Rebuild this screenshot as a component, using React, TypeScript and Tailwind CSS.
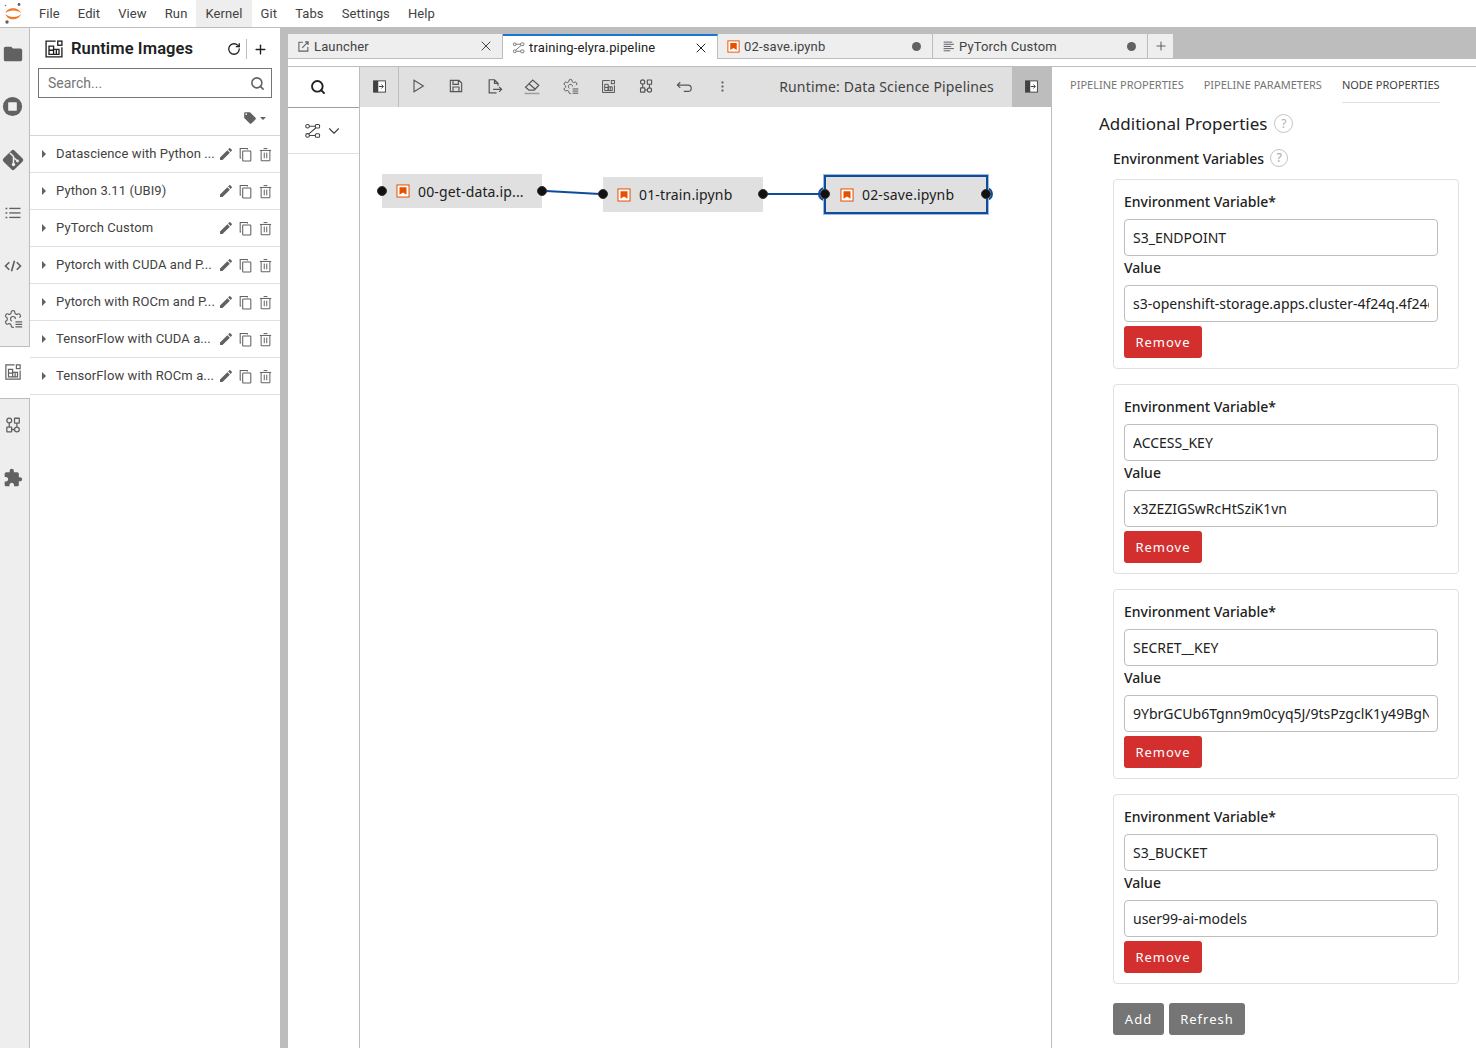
import { ChevronDown, Plus, RotateCw, Search, X } from "lucide-react";

const ui = "font-['Roboto',sans-serif]";
const noto = "font-['Noto_Sans',sans-serif]";

type P = { className?: string };

const Filled = ({ d, className }: P & { d: string }) => (
  <svg viewBox="0 0 24 24" className={className} fill="currentColor">
    <path d={d} />
  </svg>
);

const Line = ({ className, children }: P & { children: React.ReactNode }) => (
  <svg viewBox="0 0 24 24" className={className} fill="none" stroke="currentColor" strokeWidth="1.7">
    {children}
  </svg>
);

const JupyterLogo = () => (
  <svg viewBox="0 0 24 27" className="w-[24px] h-[27px]">
    <path d="M5.500 13C7 6.500 19 6.500 21 13 18 9.500 9 9.500 5.500 13z" fill="#f37726" />
    <path d="M5.500 14C7 21 19 21 21 14 18 18 9 18 5.500 14z" fill="#f37726" />
    <circle cx="19" cy="4.500" r="1.400" fill="#616161" />
    <circle cx="7" cy="22" r="1.700" fill="#616161" />
    <circle cx="5.500" cy="5.500" r="0.800" fill="#757575" />
  </svg>
);

const FolderIcon = ({ className }: P) => (
  <Filled className={className} d="M10 4H4c-1.1 0-1.99.9-1.99 2L2 18c0 1.1.9 2 2 2h16c1.1 0 2-.9 2-2V8c0-1.1-.9-2-2-2h-8l-2-2z" />
);

const StopIcon = ({ className }: P) => (
  <svg viewBox="0 0 24 24" className={className}>
    <circle cx="12" cy="12" r="10" fill="currentColor" />
    <rect x="7.500" y="7.500" width="9" height="9" rx="0.500" fill="#eeeeee" />
  </svg>
);

const GitIcon = ({ className }: P) => (
  <svg viewBox="0 0 24 24" className={className}>
    <rect x="4.200" y="4.200" width="15.600" height="15.600" rx="2" transform="rotate(45 12 12)" fill="currentColor" />
    <path d="M9 5l3.500 3.500v8M12.500 9.500l4 3.500" stroke="#eeeeee" strokeWidth="1.500" fill="none" />
    <circle cx="12.500" cy="16.500" r="1.700" fill="#eeeeee" />
    <circle cx="16.500" cy="13" r="1.400" fill="#eeeeee" />
  </svg>
);

const ListIcon = ({ className }: P) => (
  <svg viewBox="0 0 24 24" className={className} fill="currentColor">
    <rect x="7" y="5" width="15" height="1.800" />
    <rect x="7" y="11" width="15" height="1.800" />
    <rect x="7" y="17" width="15" height="1.800" />
    <rect x="2" y="5" width="2.400" height="2" />
    <rect x="2" y="11" width="2.400" height="2" />
    <rect x="2" y="17" width="2.400" height="2" />
  </svg>
);

const CodeIcon = ({ className }: P) => (
  <svg viewBox="0 0 24 24" className={className} fill="none" stroke="currentColor" strokeWidth="2.200">
    <path d="M7 7l-5 5 5 5M17 7l5 5-5 5M14 5l-4 14" />
  </svg>
);

const GearListIcon = ({ className }: P) => (
  <svg viewBox="0 0 24 24" className={className} fill="none" stroke="currentColor" strokeWidth="1.400">
    <path d="M12.220 2h-.44a2 2 0 0 0-2 2v.18a2 2 0 0 1-1 1.730l-.43.25a2 2 0 0 1-2 0l-.15-.08a2 2 0 0 0-2.730.73l-.22.38a2 2 0 0 0 .73 2.730l.15.1a2 2 0 0 1 1 1.720v.51a2 2 0 0 1-1 1.740l-.15.09a2 2 0 0 0-.73 2.730l.22.38a2 2 0 0 0 2.730.73l.15-.08a2 2 0 0 1 2 0l.43.25a2 2 0 0 1 1 1.730V20a2 2 0 0 0 2 2h1.200" />
    <path d="M12.220 2a2 2 0 0 1 2 2v.18a2 2 0 0 0 1 1.730l.43.25a2 2 0 0 0 2 0l.15-.08a2 2 0 0 1 2.730.73l.22.38a2 2 0 0 1-.73 2.730l-.4.3" />
    <path d="M15 12a3 3 0 1 0-4.500 2.600" />
    <path d="M15 15.500h8M15 18.500h8M15 21.500h8" />
  </svg>
);

const ImagesIcon = ({ className }: P) => (
  <svg viewBox="0 0 24 24" className={className} fill="none" stroke="currentColor" strokeWidth="1.600">
    <path d="M14 2.500H2.500v19h19V10" />
    <rect x="16.500" y="2.500" width="5" height="5" />
    <path d="M6 8.500h5.500v10H6zM11.500 12.500h6.500v6h-6.500zM6 13.500h5.500M14.800 12.500v6" />
  </svg>
);

const CatalogIcon = ({ className }: P) => (
  <svg viewBox="0 0 24 24" className={className} fill="none" stroke="currentColor" strokeWidth="1.700">
    <circle cx="7" cy="6" r="3.200" />
    <rect x="14" y="3" width="6.400" height="6.400" rx="0.500" />
    <rect x="3.800" y="14.800" width="6.400" height="6.400" rx="0.500" />
    <circle cx="17.200" cy="18" r="3.200" />
    <path d="M7 9.200v5.600M17.200 9.400v5.400M10.200 18H14" />
  </svg>
);

const PuzzleIcon = ({ className }: P) => (
  <Filled className={className} d="M20.500 11H19V7c0-1.100-.9-2-2-2h-4V3.500C13 2.120 11.880 1 10.500 1S8 2.120 8 3.500V5H4c-1.100 0-1.990.9-1.990 2v3.800H3.500c1.490 0 2.700 1.210 2.700 2.700s-1.210 2.700-2.700 2.700H2V20c0 1.100.9 2 2 2h3.800v-1.500c0-1.490 1.210-2.700 2.700-2.700 1.490 0 2.700 1.210 2.700 2.700V22H17c1.100 0 2-.9 2-2v-4h1.500c1.380 0 2.500-1.120 2.500-2.500S21.880 11 20.500 11z" />
);

const PencilIcon = ({ className }: P) => (
  <Filled className={className} d="M3 17.250V21h3.750L17.810 9.940l-3.750-3.750L3 17.250zM20.710 7.040c.39-.39.39-1.020 0-1.410l-2.340-2.340c-.39-.39-1.020-.39-1.410 0l-1.830 1.830 3.750 3.750 1.830-1.830z" />
);

const CopyIcon = ({ className }: P) => (
  <svg viewBox="0 0 24 24" className={className} fill="none" stroke="currentColor" strokeWidth="1.700">
    <path d="M5 17.500H3.500v-15H15V4" />
    <rect x="7.500" y="6.500" width="13" height="16" rx="1" />
  </svg>
);

const TrashIcon = ({ className }: P) => (
  <svg viewBox="0 0 24 24" className={className} fill="none" stroke="currentColor" strokeWidth="1.600">
    <path d="M3 5.500h18M9 2.500h6M5 5.500v16.500h14V5.500M10 9v9M14 9v9" />
  </svg>
);

const TagIcon = ({ className }: P) => (
  <Filled className={className} d="M21.410 11.580l-9-9C12.050 2.220 11.550 2 11 2H4c-1.100 0-2 .9-2 2v7c0 .55.22 1.050.59 1.420l9 9c.36.36.86.58 1.410.58.55 0 1.050-.22 1.410-.59l7-7c.37-.36.59-.86.59-1.410 0-.55-.23-1.060-.59-1.420zM5.500 7C4.670 7 4 6.330 4 5.500S4.670 4 5.500 4 7 4.670 7 5.500 6.330 7 5.500 7z" />
);

const PipelineIcon = ({ className }: P) => (
  <svg viewBox="0 0 24 24" className={className} fill="none" stroke="currentColor" strokeWidth="1.500">
    <circle cx="5" cy="6" r="2.600" />
    <rect x="16" y="3.500" width="6" height="5" rx="1.500" />
    <circle cx="5" cy="19" r="2.600" />
    <rect x="16" y="16.500" width="6" height="5" rx="1.500" />
    <path d="M7.600 6H16M7.600 19H16M16.500 8.500L6.500 17" />
  </svg>
);

const LaunchIcon = ({ className }: P) => (
  <svg viewBox="0 0 24 24" className={className} fill="none" stroke="currentColor" strokeWidth="2">
    <path d="M11 4H3.500v16.500H20V13M9.500 14.500L20.500 3.500M15 3.500h5.500V9" />
  </svg>
);

const NotebookIcon = ({ className }: P) => (
  <svg viewBox="0 0 22 22" className={className}>
    <rect x="1.500" y="1.500" width="19" height="19" fill="#fff" stroke="#e65100" strokeWidth="1.600" />
    <path d="M5.500 5h11v12l-5.500-3.500L5.500 17z" fill="#e65100" />
  </svg>
);

const TextFileIcon = ({ className }: P) => (
  <svg viewBox="0 0 24 24" className={className} fill="currentColor">
    <rect x="3" y="3" width="16" height="1.800" />
    <rect x="3" y="7" width="19" height="1.800" />
    <rect x="3" y="11" width="14" height="1.800" />
    <rect x="3" y="15" width="19" height="1.800" />
    <rect x="3" y="19" width="12" height="1.800" />
  </svg>
);

const SidebarIcon = ({ className }: P) => (
  <svg viewBox="0 0 24 24" className={className}>
    <rect x="2.500" y="3" width="19" height="18" fill="#fff" stroke="#424242" strokeWidth="1.500" />
    <rect x="2.500" y="3" width="7.500" height="18" fill="#424242" />
    <path d="M11 12h7M15 9l3.200 3-3.200 3" stroke="#424242" strokeWidth="1.600" fill="none" />
  </svg>
);

const PlayIcon = ({ className }: P) => (
  <Line className={className}>
    <path d="M6 3.500L20 12 6 20.500z" />
  </Line>
);

const SaveIcon = ({ className }: P) => (
  <Line className={className}>
    <path d="M3.500 3.500h13l4 4v13h-17zM7.500 3.500v6h8v-6M7.500 20.500v-7h9v7" />
  </Line>
);

const ExportIcon = ({ className }: P) => (
  <Line className={className}>
    <path d="M15 21H4.500V2.500H12l5 5V11M12 2.500v5h5M10 16h12M18.500 12.500L22 16l-3.500 3.500" />
  </Line>
);

const EraserIcon = ({ className }: P) => (
  <Line className={className}>
    <path d="M3.500 13.500L13 4l8 7-6 6.500H8zM8 9l8 7" />
    <path d="M2 22h20" strokeWidth="2" stroke="#9e9e9e" />
  </Line>
);

const UndoIcon = ({ className }: P) => (
  <Line className={className}>
    <path d="M6 6L2 10l4 4M2 10h15a4.500 4.500 0 0 1 0 9h-6" />
  </Line>
);

const DotsIcon = ({ className }: P) => (
  <svg viewBox="0 0 24 24" className={className} fill="currentColor">
    <rect x="10.500" y="4" width="3" height="3" />
    <rect x="10.500" y="10.500" width="3" height="3" />
    <rect x="10.500" y="17" width="3" height="3" />
  </svg>
);

const menus = ["File", "Edit", "View", "Run", "Kernel", "Git", "Tabs", "Settings", "Help"];

const railIcons = [
  <FolderIcon className="w-[22px] h-[22px]" />,
  <StopIcon className="w-[23px] h-[23px]" />,
  <GitIcon className="w-[24px] h-[24px]" />,
  <ListIcon className="w-[18px] h-[18px]" />,
  <CodeIcon className="w-[18px] h-[18px]" />,
  <GearListIcon className="w-[20px] h-[20px]" />,
  <ImagesIcon className="w-[18px] h-[18px]" />,
  <CatalogIcon className="w-[18px] h-[18px]" />,
  <PuzzleIcon className="w-[20px] h-[20px]" />,
];

const images = [
  "Datascience with Python ...",
  "Python 3.11 (UBI9)",
  "PyTorch Custom",
  "Pytorch with CUDA and P...",
  "Pytorch with ROCm and P...",
  "TensorFlow with CUDA a...",
  "TensorFlow with ROCm a...",
];

const envVars = [
  { name: "S3_ENDPOINT", value: "s3-openshift-storage.apps.cluster-4f24q.4f24q.sandbox" },
  { name: "ACCESS_KEY", value: "x3ZEZIGSwRcHtSziK1vn" },
  { name: "SECRET__KEY", value: "9YbrGCUb6Tgnn9m0cyq5J/9tsPzgclK1y49BgNkLmPq" },
  { name: "S3_BUCKET", value: "user99-ai-models" },
];

const Rail = () => (
  <div className="w-[30px] shrink-0 flex flex-col text-[#616161]">
    {railIcons.map((icon, i) => (
      <div
        key={i}
        className={
          i === 6
            ? "h-[53px] flex items-center justify-center pr-[4px] pb-[2px] bg-white border-y border-[#bdbdbd]"
            : "h-[53px] flex items-center justify-center pr-[4px] pb-[2px] bg-[#eeeeee] border-r border-[#bdbdbd]"
        }
      >
        {icon}
      </div>
    ))}
    <div className="flex-1 bg-[#eeeeee] border-r border-[#bdbdbd]" />
  </div>
);

const RuntimePanel = () => (
  <div className={`w-[250px] shrink-0 bg-white flex flex-col ${ui}`}>
    <div className="h-[40px] flex items-center pl-[14px] pr-[12px] pt-[2px] text-[#212121]">
      <ImagesIcon className="w-[20px] h-[20px] mr-[7px]" />
      <span className="text-[16.5px] font-semibold tracking-[0.1px] flex-1">Runtime Images</span>
      <RotateCw className="w-[14px] h-[14px] mr-[5px]" strokeWidth={2.2} />
      <div className="w-px h-[20px] bg-[#bdbdbd] mr-[6px]" />
      <Plus className="w-[15px] h-[15px]" strokeWidth={2.2} />
    </div>
    <div className="mx-[8px] h-[30px] border border-[#757575] flex items-center pl-[9px] pr-[6px]">
      <span className="flex-1 text-[14px] text-[#757575]">Search...</span>
      <Search className="w-[15px] h-[15px] text-[#616161]" strokeWidth={2.5} />
    </div>
    <div className="h-[38px] pt-[3px] flex items-center justify-end pr-[14px] border-b border-[#d4d4d4] text-[#616161]">
      <TagIcon className="w-[14px] h-[14px] mr-[3px]" />
      <div className="w-0 h-0 border-x-[3px] border-x-transparent border-t-[3px] border-t-[#616161]" />
    </div>
    {images.map((name) => (
      <div key={name} className="h-[37px] flex items-center border-b border-[#e0e0e0] text-[#424242]">
        <div className="w-0 h-0 ml-[12px] border-y-[4px] border-y-transparent border-l-[4px] border-l-[#616161]" />
        <span className="ml-[10px] w-[160px] whitespace-nowrap overflow-hidden text-[13px] tracking-[0.1px]">{name}</span>
        <PencilIcon className="w-[16px] h-[16px] ml-[2px] text-[#616161]" />
        <CopyIcon className="w-[15px] h-[17px] ml-[4px] text-[#616161]" />
        <TrashIcon className="w-[15px] h-[17px] ml-[5px] text-[#616161]" />
      </div>
    ))}
  </div>
);

const Tab = ({
  icon,
  label,
  active,
  dirty,
}: {
  icon: React.ReactNode;
  label: string;
  active?: boolean;
  dirty?: boolean;
}) => (
  <div
    className={
      active
        ? "w-[215px] h-[25px] -mb-px flex items-center pl-[9px] pr-[8px] bg-white border-t-2 border-t-[#1976d2] border-r border-r-[#bdbdbd] text-[#212121]"
        : "w-[215px] h-[24px] flex items-center pl-[9px] pr-[8px] bg-[#eeeeee] border-r border-r-[#bdbdbd] text-[#424242]"
    }
  >
    {icon}
    <span className={`ml-[4px] pt-[1px] flex-1 text-[13px] tracking-[0.15px] ${ui}`}>{label}</span>
    {dirty ? <div className="w-[9px] h-[9px] rounded-full bg-[#616161] mr-[3px]" /> : <X className="w-[16px] h-[16px]" strokeWidth={1.5} />}
  </div>
);

const TabBar = () => (
  <div className="h-[32px] shrink-0 bg-[#bdbdbd] pt-[7px] flex items-start">
    <Tab icon={<LaunchIcon className="w-[13px] h-[13px] text-[#616161]" />} label="Launcher" />
    <Tab icon={<PipelineIcon className="w-[13px] h-[13px] text-[#616161]" />} label="training-elyra.pipeline" active />
    <Tab icon={<NotebookIcon className="w-[13px] h-[13px]" />} label="02-save.ipynb" dirty />
    <Tab icon={<TextFileIcon className="w-[13px] h-[13px] text-[#616161]" />} label="PyTorch Custom" dirty />
    <div className="w-[25px] h-[24px] bg-[#eeeeee] flex items-center justify-center text-[#616161]">
      <Plus className="w-[14px] h-[14px]" strokeWidth={1.8} />
    </div>
  </div>
);

const Palette = () => (
  <div className="w-[72px] shrink-0 border-r border-[#bdbdbd] flex flex-col">
    <div className="h-[41px] flex items-center justify-center border-b border-[#9e9e9e] pr-[12px] text-[#212121]">
      <Search className="w-[16px] h-[16px]" strokeWidth={2.8} />
    </div>
    <div className="h-[46px] flex items-center justify-center gap-[4px] border-b border-[#e0e0e0] pr-[1px] text-[#424242]">
      <PipelineIcon className="w-[17px] h-[17px]" />
      <ChevronDown className="w-[18px] h-[18px]" strokeWidth={1.5} />
    </div>
  </div>
);

const toolIcons = [
  <PlayIcon className="w-[16px] h-[16px]" />,
  <SaveIcon className="w-[16px] h-[16px]" />,
  <ExportIcon className="w-[17px] h-[17px]" />,
  <EraserIcon className="w-[18px] h-[18px]" />,
  <GearListIcon className="w-[17px] h-[17px]" />,
  <ImagesIcon className="w-[15px] h-[15px]" />,
  <CatalogIcon className="w-[16px] h-[16px]" />,
  <UndoIcon className="w-[17px] h-[17px]" />,
  <DotsIcon className="w-[15px] h-[15px]" />,
];

const Toolbar = () => (
  <div className="h-[40px] shrink-0 bg-[#e0e0e0] flex items-center text-[#555555]">
    <div className="w-[39px] h-full flex items-center justify-center border-r border-[#bdbdbd] pb-[2px]">
      <SidebarIcon className="w-[15px] h-[15px]" />
    </div>
    {toolIcons.map((icon, i) => (
      <div key={i} className="w-[38px] h-full flex items-center justify-center pb-[2px]">
        {icon}
      </div>
    ))}
    <span className={`flex-1 text-right pr-[18px] pb-[1px] text-[14px] tracking-[0.17px] text-[#424242] ${noto}`}>Runtime: Data Science Pipelines</span>
    <div className="w-[39px] h-full bg-[#bdbdbd] flex items-center justify-center pb-[2px]">
      <SidebarIcon className="w-[15px] h-[15px]" />
    </div>
  </div>
);

const Port = ({ className }: P) => (
  <div className={`absolute w-[10px] h-[10px] rounded-full bg-[#111111] border border-[#333333] ${className}`} />
);

const PipelineNode = ({ label, className }: P & { label: string }) => (
  <div className={`absolute flex items-center bg-[#e0e0e0] ${noto} ${className}`}>
    <NotebookIcon className="w-[14px] h-[14px] ml-[14px] mr-[8px] shrink-0" />
    <span className="text-[14px] tracking-[0.15px] text-[#212121] whitespace-nowrap">{label}</span>
  </div>
);

const Canvas = () => (
  <div className="relative flex-1 bg-white">
    <svg className="absolute left-0 top-0 w-full h-[140px]" fill="none" stroke="#0f4c9c" strokeWidth="2">
      <path d="M186 84L240 87" />
      <path d="M407 87H462" />
    </svg>
    <div className="absolute left-[458px] top-[80px] w-[14px] h-[14px] rounded-full border-2 border-[#0f4c9c]" />
    <div className="absolute left-[619px] top-[80px] w-[14px] h-[14px] rounded-full border-2 border-[#0f4c9c]" />
    <PipelineNode label="00-get-data.ip..." className="left-[22px] top-[67px] w-[160px] h-[34px]" />
    <PipelineNode label="01-train.ipynb" className="left-[243px] top-[70px] w-[160px] h-[35px]" />
    <PipelineNode
      label="02-save.ipynb"
      className="left-[464px] top-[68px] w-[164px] h-[39px] border-2 border-[#0f4c9c] shadow-[0_0_0_1px_#9db9df]"
    />
    <Port className="left-[17px] top-[79px]" />
    <Port className="left-[177px] top-[79px]" />
    <Port className="left-[238px] top-[82px]" />
    <Port className="left-[398px] top-[82px]" />
    <Port className="left-[460px] top-[82px]" />
    <Port className="left-[621px] top-[82px]" />
  </div>
);

const HelpDot = ({ className }: P) => (
  <div className={`rounded-full border border-[#c4c4c4] flex items-center justify-center text-[#b0b0b0] ${className}`}>?</div>
);

const EnvCard = ({ name, value }: { name: string; value: string }) => (
  <div className="h-[190px] rounded-[4px] border border-[#e0e0e0] pl-[10px] pt-[12px] mb-[15px]">
    <div className="h-[20px] text-[14px] font-medium leading-[20px] text-[#212121]">Environment Variable*</div>
    <input
      readOnly
      value={name}
      className="block mt-[7px] w-[314px] h-[37px] rounded-[4px] border border-[#bdbdbd] px-[8px] text-[14px] text-[#212121] outline-none"
    />
    <div className="mt-[2px] h-[20px] leading-[20px] text-[14px] font-medium text-[#212121]">Value</div>
    <input
      readOnly
      value={value}
      className="block mt-[7px] w-[314px] h-[37px] rounded-[4px] border border-[#bdbdbd] px-[8px] text-[14px] text-[#212121] outline-none"
    />
    <button className="block mt-[4px] pt-[1px] w-[78px] h-[32px] rounded-[3px] bg-[#d32f2f] text-white text-[13px] tracking-[1px]">Remove</button>
  </div>
);

const PropertiesPanel = () => (
  <div className={`w-[425px] shrink-0 border-l border-[#bdbdbd] bg-white overflow-hidden ${noto}`}>
    <div className="h-[36px] flex items-start pl-[18px] pt-[10px] gap-[20px] text-[11px] text-[#757575]">
      <span>PIPELINE PROPERTIES</span>
      <span>PIPELINE PARAMETERS</span>
      <span className="h-[26px] border-b border-[#e0e0e0] text-[#424242]">NODE PROPERTIES</span>
    </div>
    <div className="pl-[47px] pt-[7px] flex items-center gap-[7px] h-[34px] text-[17px] text-[#212121]">
      Additional Properties
      <HelpDot className="w-[19px] h-[19px] text-[12px]" />
    </div>
    <div className="pl-[61px] pt-[5px] flex items-center gap-[6px] h-[37px] text-[14px] font-medium text-[#212121]">
      Environment Variables
      <HelpDot className="w-[18px] h-[18px] text-[12px]" />
    </div>
    <div className="ml-[61px] mr-[17px] mt-[5px]">
      {envVars.map((e) => (
        <EnvCard key={e.name} name={e.name} value={e.value} />
      ))}
      <div className="flex gap-[5px] mt-[19px]">
        <button className="pt-[1px] w-[51px] h-[32px] rounded-[3px] bg-[#757575] text-white text-[13px] tracking-[1px]">Add</button>
        <button className="pt-[1px] w-[76px] h-[32px] rounded-[3px] bg-[#757575] text-white text-[13px] tracking-[1px]">Refresh</button>
      </div>
    </div>
  </div>
);

export default function App() {
  return (
    <div className="w-[1476px] h-[1048px] overflow-hidden flex flex-col bg-white">
      <div className={`h-[27px] shrink-0 flex items-stretch text-[13px] tracking-[0.1px] text-[#424242] ${ui}`}>
        <div className="w-[30px] flex items-center justify-start">
          <JupyterLogo />
        </div>
        {menus.map((m) => (
          <div key={m} className={m === "Kernel" ? "px-[9px] flex items-center bg-[#eeeeee]" : "px-[9px] flex items-center"}>
            {m}
          </div>
        ))}
      </div>
      <div className="flex-1 min-h-0 flex border-t border-[#bdbdbd]">
        <Rail />
        <RuntimePanel />
        <div className="w-[8px] shrink-0 bg-[#bdbdbd]" />
        <div className="flex-1 min-w-0 flex flex-col -mt-px">
          <TabBar />
          <div className="h-[8px] shrink-0 bg-white border-b border-[#bdbdbd]" />
          <div className="flex-1 min-h-0 flex">
            <Palette />
            <div className="flex-1 min-w-0 flex flex-col">
              <Toolbar />
              <Canvas />
            </div>
            <PropertiesPanel />
          </div>
        </div>
      </div>
    </div>
  );
}
